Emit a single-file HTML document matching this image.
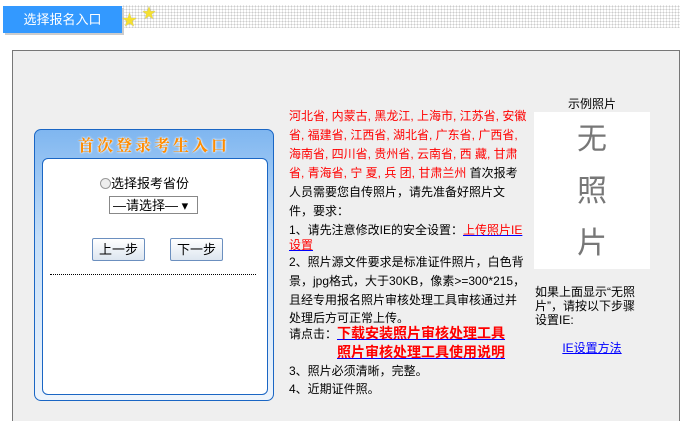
<!DOCTYPE html>
<html><head><meta charset="utf-8"><style>
html{overflow:hidden;height:421px}
body{margin:0;width:680px;height:421px;background:#fff;overflow:hidden;position:relative;font-family:"Liberation Sans","Noto Sans CJK SC",sans-serif;font-size:12px;color:#000}
.a{position:absolute}
.tab{left:3px;top:6px;width:119px;height:27px;background:#3399ff;color:#fff;font-size:13px;text-align:center;line-height:27px;box-shadow:2px 2px 0 #ccc}
.dots{left:122px;top:5px;width:558px;height:23px;background-image:radial-gradient(#ccc 0.8px,transparent 0.9px);background-size:3px 3px}
.panel{left:12px;top:50px;width:666px;height:371px;background:#efefef;border:1px solid #777;border-bottom:none}
.lb{left:34px;top:129px;width:238px;height:270px;border:1px solid #1a66c4;border-radius:7px;background:linear-gradient(#7fb6f0,#c4def8 40%,#eef4fb)}
.ib{left:42px;top:158px;width:224px;height:235px;background:#fff;border:1px solid #1a66c4;border-radius:6px}
.title{left:34px;top:133px;width:240px;text-align:center;color:#ff8c00;font-weight:bold;font-size:16px;letter-spacing:3px;font-family:"Liberation Serif","Noto Serif CJK SC",serif;text-shadow:0 0 2px #fff,0 0 2px #fff}
.btn{width:51px;height:21px;border:1px solid #6b8fbf;border-radius:2px;background:linear-gradient(#fff,#dde6f0);text-align:center;line-height:21px;font-size:13px}
.l{position:absolute;left:289px;height:18px;line-height:18px;white-space:nowrap;font-size:12px}
.r{color:#f00}
a{color:#00f;text-decoration:underline}
.b{color:#f00;font-weight:bold;font-size:14px;text-decoration-color:#00f}
</style></head><body>
<div class="a tab">选择报名入口</div>
<div class="a dots"></div>
<div class="a" style="left:122px;top:9px;color:#f5e030;font-size:15px;text-shadow:0 0 1px #886">★</div>
<div class="a" style="left:142px;top:3px;color:#f5e030;font-size:14px;text-shadow:0 0 1px #886">★</div>
<div class="a panel"></div>
<div class="a lb"></div>
<div class="a title">首次登录考生入口</div>
<div class="a ib"></div>
<div class="a" style="left:100px;top:173px;font-size:13px"><span style="display:inline-block;width:9px;height:9px;border:1px solid #999;border-radius:50%;vertical-align:-1px;background:#eee"></span>选择报考省份</div>
<div class="a" style="left:109px;top:196px;height:18px;border:1px solid #888;background:#fff;font-size:13px;line-height:18px;padding-left:3px;box-sizing:border-box;width:89px">—请选择— ▾</div>
<div class="a btn" style="left:92px;top:238px">上一步</div>
<div class="a btn" style="left:170px;top:238px">下一步</div>
<div class="a" style="left:50px;top:274px;width:206px;border-top:1px dotted #000"></div>

<div class="l r" style="top:107px">河北省, 内蒙古, 黑龙江, 上海市, 江苏省, 安徽</div>
<div class="l r" style="top:126px">省, 福建省, 江西省, 湖北省, 广东省, 广西省,</div>
<div class="l r" style="top:145px">海南省, 四川省, 贵州省, 云南省, 西&nbsp;藏, 甘肃</div>
<div class="l" style="top:164px"><span class="r">省, 青海省, 宁&nbsp;夏, 兵&nbsp;团, 甘肃兰州</span> 首次报考</div>
<div class="l" style="top:183px">人员需要您自传照片，请先准备好照片文</div>
<div class="l" style="top:202px">件，要求：</div>
<div class="l" style="top:221px">1、请先注意修改IE的安全设置：<a style="color:#f00;text-decoration-color:#00f">上传照片IE</a></div>
<div class="l" style="top:236px"><a style="color:#f00;text-decoration-color:#00f">设置</a></div>
<div class="l" style="top:253px">2、照片源文件要求是标准证件照片，白色背</div>
<div class="l" style="top:272px">景，jpg格式，大于30KB，像素&gt;=300*215，</div>
<div class="l" style="top:291px">且经专用报名照片审核处理工具审核通过并</div>
<div class="l" style="top:309px">处理后方可正常上传。</div>
<div class="l" style="top:324px">请点击：<a class="b">下载安装照片审核处理工具</a></div>
<div class="l" style="top:343px;left:337px"><a class="b">照片审核处理工具使用说明</a></div>
<div class="l" style="top:362px">3、照片必须清晰，完整。</div>
<div class="l" style="top:380px">4、近期证件照。</div>

<div class="a" style="left:534px;top:95px;width:116px;text-align:center">示例照片</div>
<div class="a" style="left:534px;top:112px;width:116px;height:157px;background:#fff;color:#777;font-size:30px;line-height:52px;text-align:center;padding-top:2px;box-sizing:border-box">无<br>照<br>片</div>
<div class="a" style="left:535px;top:285px;width:125px;line-height:14px;white-space:nowrap">如果上面显示“无照<br>片”，请按以下步骤<br>设置IE:</div>
<div class="a" style="left:534px;top:339px;width:116px;text-align:center"><a>IE设置方法</a></div>
</body></html>
